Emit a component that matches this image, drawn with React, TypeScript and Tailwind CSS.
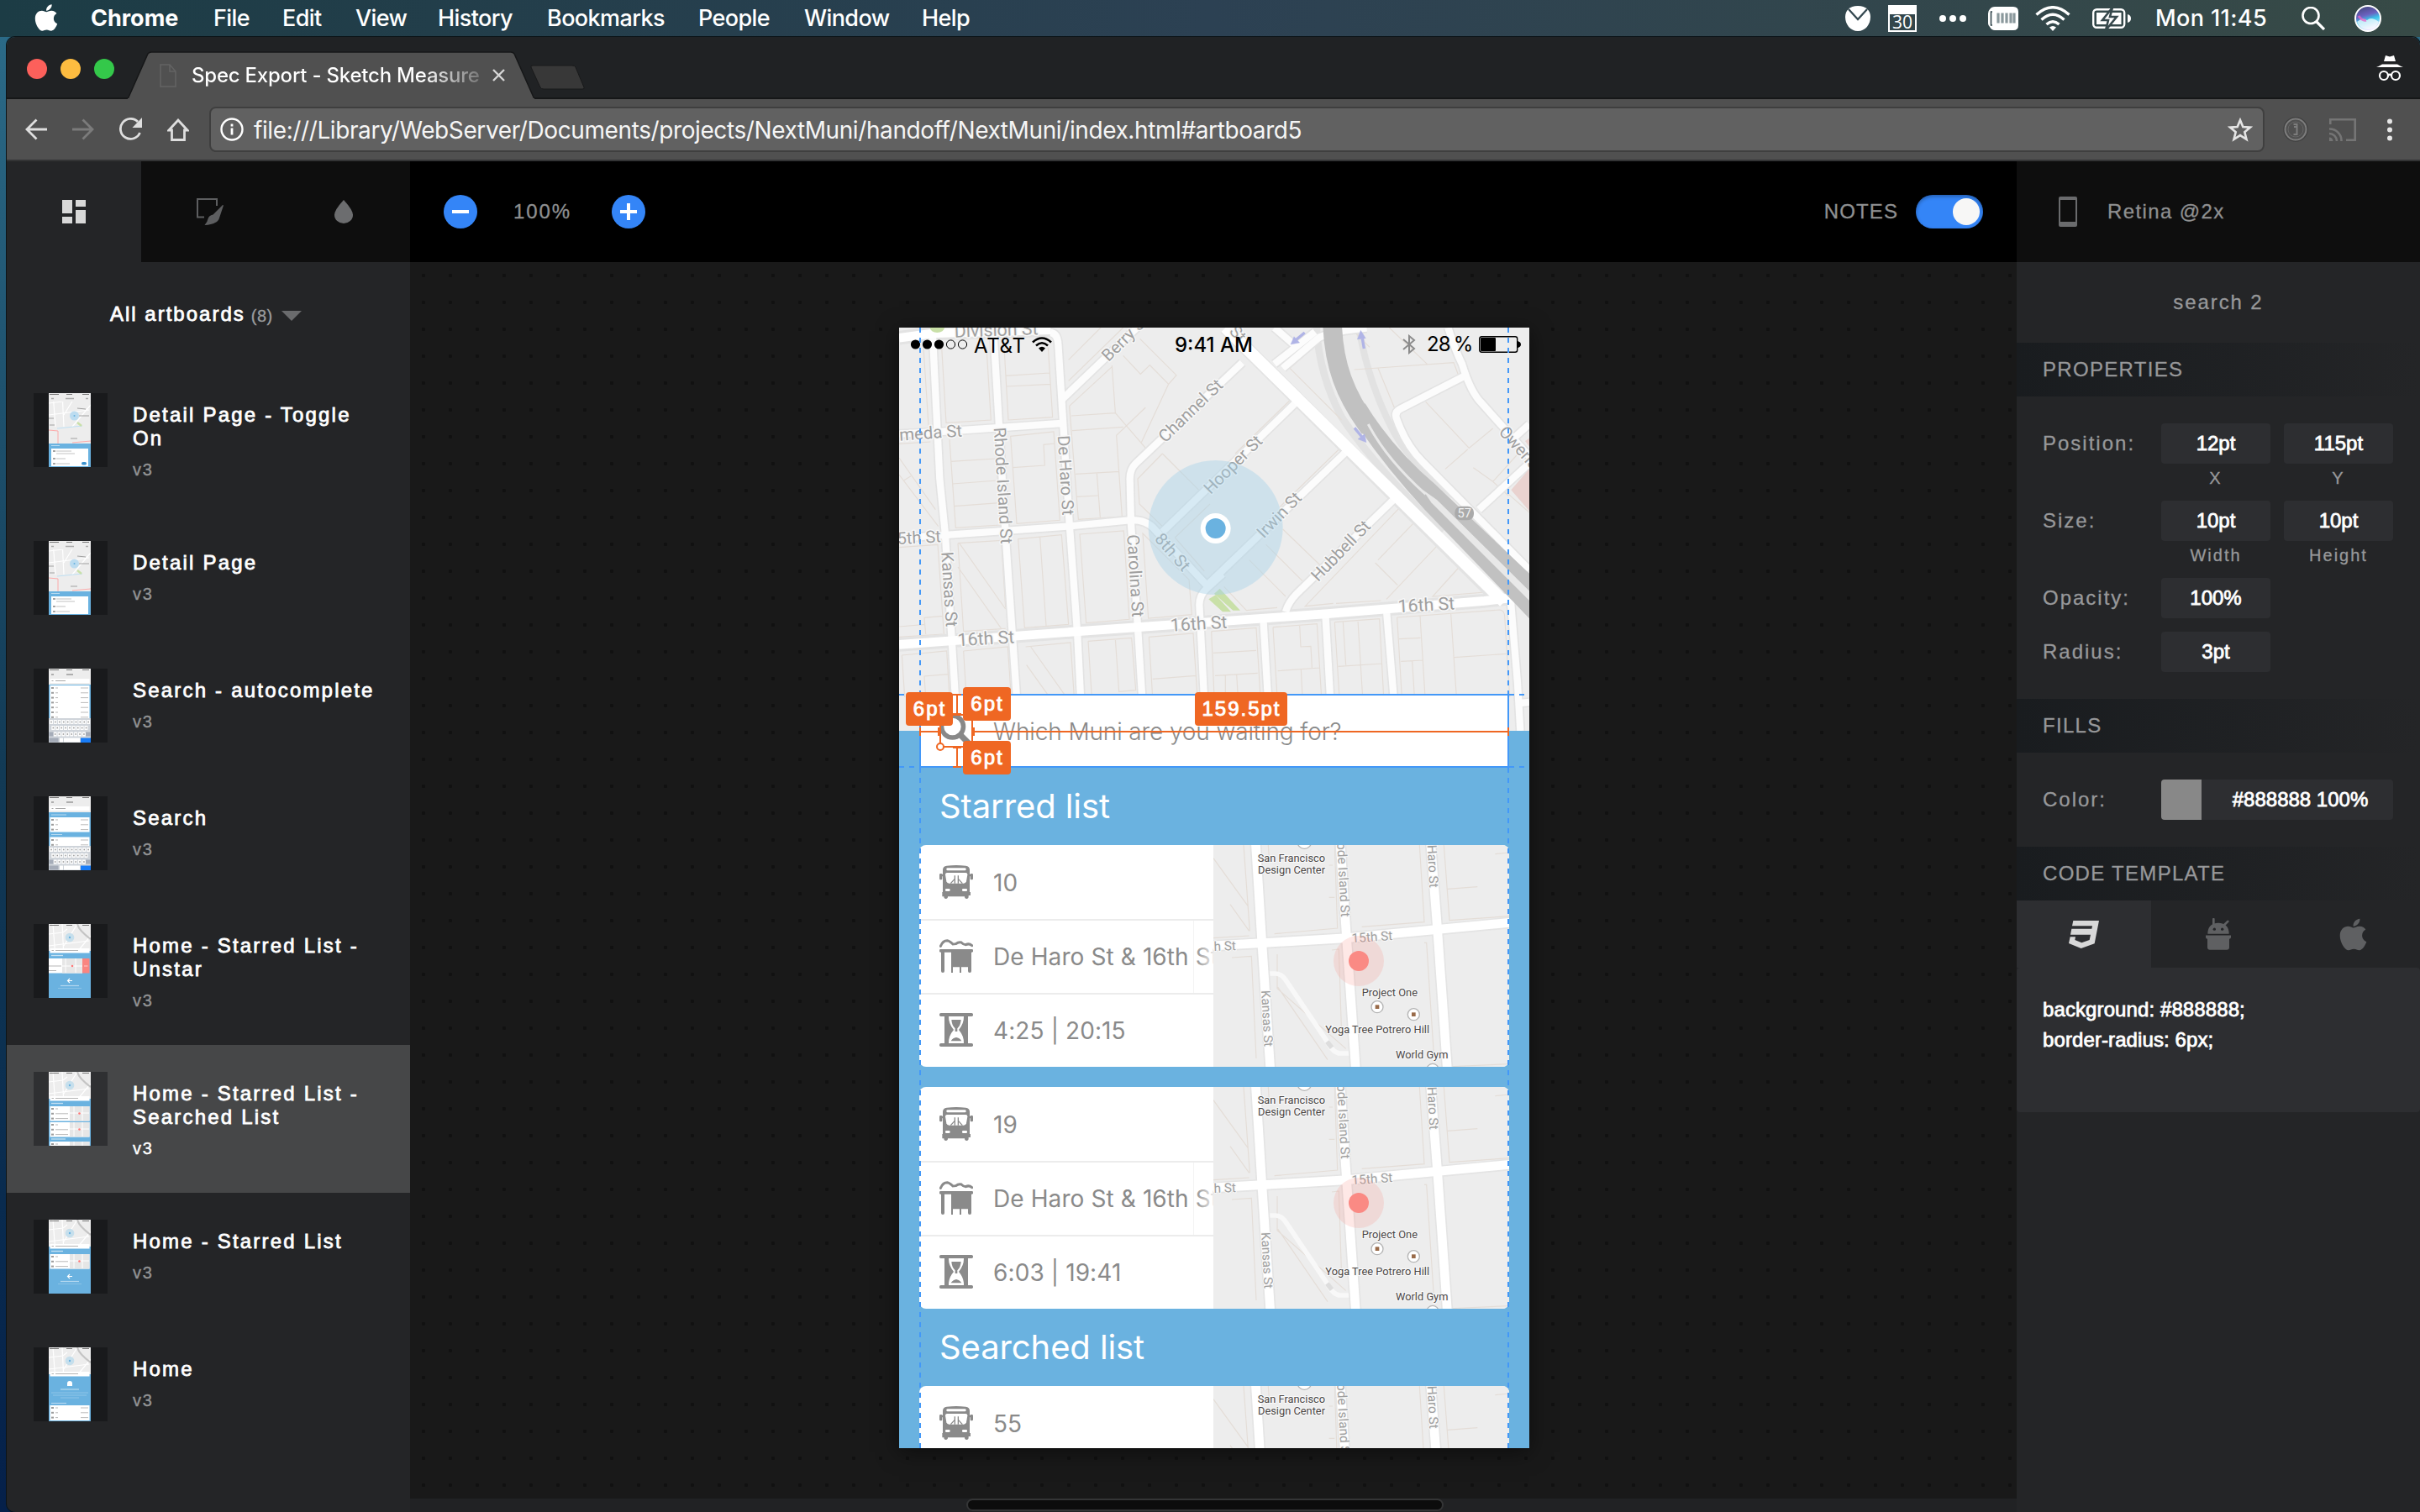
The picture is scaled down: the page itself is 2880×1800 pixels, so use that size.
import type { ReactNode } from 'react';
import { FaApple } from 'react-icons/fa';

/* ---------- macOS menu bar ---------- */

const MENUS = [
  { label: 'Chrome', cls: 'w-[146px] font-bold tracking-[0px]' },
  { label: 'File', cls: 'w-[82px]' },
  { label: 'Edit', cls: 'w-[87px]' },
  { label: 'View', cls: 'w-[98px]' },
  { label: 'History', cls: 'w-[130px]' },
  { label: 'Bookmarks', cls: 'w-[180px]' },
  { label: 'People', cls: 'w-[126px]' },
  { label: 'Window', cls: 'w-[140px]' },
  { label: 'Help', cls: 'w-[70px]' },
];

function MenuBar() {
  return (
    <header className="flex h-11 items-center bg-gradient-to-r from-[#1c3c45] via-[#2c4153] to-[#374a46] font-[Inter] text-[27px] font-medium tracking-[-0.6px] text-white">
      <FaApple className="mb-[3px] ml-[37px] size-9" />
      <nav className="ml-[35px] flex pt-px">
        {MENUS.map((m) => (
          <span key={m.label} className={m.cls}>{m.label}</span>
        ))}
      </nav>
      <div className="ml-auto flex items-center">
        <svg className="h-[32px] w-[32px]" viewBox="0 0 32 32">
          <path d="M16 1C26 1 31 7 31 14c0 9-6 17-15 17S1 23 1 14C1 7 6 1 16 1z" fill="#fff" />
          <path d="M5 5l11 12L27 5" fill="none" stroke="#33474f" strokeWidth="2.2" />
        </svg>
        <svg className="ml-5 h-8 w-[34px]" viewBox="0 0 34 32">
          <rect x="1" y="1" width="32" height="30" fill="none" stroke="#fff" strokeWidth="2" />
          <rect width="34" height="11" fill="#fff" />
          <text x="17" y="28" textAnchor="middle" fontFamily="Open Sans" fontSize="21" letterSpacing="0" fill="#fff">30</text>
        </svg>
        <svg className="ml-[27px] h-2 w-8" viewBox="0 0 32 8">
          <circle cx="4" cy="4" r="4" fill="#fff" /><circle cx="16" cy="4" r="4" fill="#fff" /><circle cx="28" cy="4" r="4" fill="#fff" />
        </svg>
        <svg className="ml-[26px] h-7 w-9" viewBox="0 0 36 28">
          <path d="M8 0h22q6 0 6 6v16q0 6-6 6H8q-4 0-6-4Q0 22 0 20V8q0-3 2-5 2-3 6-3z" fill="#fff" />
          <path d="M5 6H3.500V22H5" fill="none" stroke="#35484e" strokeWidth="1.6" />
          <path d="M12 7.500v12M17 7.500v12M22 7.500v12M27 7.500v12M31 7.500v12" stroke="#8a989c" strokeWidth="3.200" />
        </svg>
        <svg className="ml-5 h-[30px] w-[42px]" viewBox="0 0 42 30">
          <g fill="none" stroke="#fff" strokeWidth="3.400">
            <path d="M1.500 10.500Q21-7 40.500 10.500" /><path d="M7.500 16.500Q21 4 34.500 16.500" /><path d="M13.500 22Q21 15.500 28.500 22" />
          </g>
          <path d="M17 25.500q4-3 8 0l-4 4.500z" fill="#fff" />
        </svg>
        <svg className="ml-[26px] h-6 w-[46px]" viewBox="0 0 46 24">
          <rect x="1.200" y="1.200" width="37" height="21.600" rx="4" fill="none" stroke="#fff" strokeWidth="2.400" />
          <rect x="5" y="5" width="29.500" height="14" fill="#fff" />
          <path d="M42 7v10q4-1 4-5t-4-5z" fill="#fff" />
          <path d="M24-1L12 14h7l-3 12 13-16h-8z" fill="#fff" stroke="#37494d" strokeWidth="2.600" />
        </svg>
        <span className="ml-[29px] w-[174px] pt-px tracking-[0.4px]">Mon 11:45</span>
        <svg className="h-7 w-7" viewBox="0 0 28 28" fill="none" stroke="#fff">
          <circle cx="11" cy="10.500" r="9.500" strokeWidth="2.600" /><path d="M17.500 17.500L27 27" strokeWidth="3.200" />
        </svg>
        <svg className="ml-[35px] mr-[46px] h-8 w-8" viewBox="0 0 32 32">
          <defs>
            <linearGradient id="siri" x1="0" y1="0" x2="0.300" y2="1">
              <stop offset="0" stopColor="#3b3f6e" /><stop offset="0.450" stopColor="#6b62c0" /><stop offset="0.650" stopColor="#39c5ea" /><stop offset="1" stopColor="#e7e4ff" />
            </linearGradient>
          </defs>
          <circle cx="16" cy="16" r="15" fill="url(#siri)" stroke="#fff" strokeWidth="2" />
          <path d="M3 20q6-6 12-2 5-5 14 2-3 9-13 9T3 20z" fill="#fff" opacity="0.700" />
          <path d="M5 13q4 6 9 5" stroke="#e566c8" strokeWidth="3" fill="none" opacity="0.800" />
        </svg>
      </div>
    </header>
  );
}

/* ---------- Browser chrome ---------- */

function TabStrip() {
  return (
    <div className="flex h-[74px] border-b-2 border-[#161718] bg-[#202224]">
      <div className="ml-6 flex items-center gap-4 pt-[3px]">
        <span className="size-6 rounded-full bg-[#fc605b]" />
        <span className="size-6 rounded-full bg-[#fdbc40]" />
        <span className="size-6 rounded-full bg-[#34c84a]" />
      </div>
      <div className="relative ml-4 mt-[17px] h-[57px] w-[484px]">
        <svg className="absolute inset-0 size-full" viewBox="0 0 484 57">
          <path d="M0 57L24 3Q25.500 1 28 1H456Q458.500 1 460 3L484 57z" fill="#505050" stroke="#161718" strokeWidth="1.500" />
          <path d="M0 56h484v1H0z" fill="#505050" />
        </svg>
        <div className="relative flex h-full items-center pl-[38px]">
          <svg className="h-7 w-5" viewBox="0 0 20 28" fill="none" stroke="#636363" strokeWidth="1.500">
            <path d="M1 1h11l7 8v18H1zM12 1v8h7" />
          </svg>
          <span className="ml-[18px] w-[345px] whitespace-nowrap bg-gradient-to-r from-white from-80% to-white/20 bg-clip-text font-[Inter] text-[24px] font-medium tracking-[-0.22px] text-transparent">
            Spec Export - Sketch Measure
          </span>
          <svg className="ml-[13px] size-[15px]" viewBox="0 0 15 15" stroke="#d6d6d6" strokeWidth="2.400"><path d="M1 1l13 13M14 1L1 14" /></svg>
        </div>
      </div>
      <svg className="-ml-[5px] mt-[33px] h-[31px] w-[66px]" viewBox="0 0 66 31">
        <path d="M3 1h47q3 0 4 2l10 24q1 2-2 2H16q-3 0-4-2L1 3q-1-2 2-2z" fill="#383838" stroke="#191a1b" strokeWidth="1" />
      </svg>
      <svg className="ml-auto mr-5 mt-[22px] h-8 w-8" viewBox="0 0 32 32" fill="#fff">
        <path d="M9 7L11 0l5 1.500L21 0l2 7zM0 14q3-1 7-3.500h18q4 2.500 7 3.500z" />
        <g fill="none" stroke="#fff" strokeWidth="2.200"><circle cx="9" cy="24" r="5" /><circle cx="23" cy="24" r="5" /><path d="M14 23.500q2-1.500 4 0" /></g>
      </svg>
    </div>
  );
}

function AddressBar() {
  return (
    <div className="flex h-[74px] items-center border-b-2 border-[#333435] bg-[#505050]">
      <div className="flex items-center gap-[30px] pl-[22px] pr-6">
        <svg className="h-[26px] w-[26px]" viewBox="0 0 26 26" fill="none" stroke="#dedede" strokeWidth="2.800"><path d="M26 13H2M13.500 1.500L2 13l11.500 11.500" /></svg>
        <svg className="h-[26px] w-[26px]" viewBox="0 0 26 26" fill="none" stroke="#7b7b7b" strokeWidth="2.800"><path d="M0 13h24M12.500 1.500L24 13 12.500 24.500" /></svg>
        <svg className="h-[28px] w-[27px]" viewBox="0 0 27 28" fill="none" stroke="#dedede" strokeWidth="2.800"><path d="M22 5A12 12 0 1 0 24.500 18" /><path d="M27 0v12H15.500z" fill="#dedede" stroke="none" /></svg>
        <svg className="h-[27px] w-[26px]" viewBox="0 0 26 27" fill="none" stroke="#dedede" strokeWidth="2.800"><path d="M5.500 14v11.500h15V14H24L13 2 2 14z" /></svg>
      </div>
      <div className="flex h-[54px] w-[2446px] items-center rounded-lg border-2 border-[#3f3f3f] bg-[#616161] pl-[11px] pr-3">
        <svg className="size-[28px]" viewBox="0 0 28 28" fill="none" stroke="#fff" strokeWidth="2.400">
          <circle cx="14" cy="14" r="12.500" /><path d="M14 12.500v8M14 7.500v3" strokeWidth="2.800" />
        </svg>
        <span className="ml-3 whitespace-nowrap pt-[2px] font-[Inter] text-[28px] tracking-[-0.4px] text-[#f5f5f5]">
          file:///Library/WebServer/Documents/projects/NextMuni/handoff/NextMuni/index.html#artboard5
        </span>
        <svg className="ml-auto h-[29px] w-[30px]" viewBox="0 0 30 29" fill="none" stroke="#e4e4e4" strokeWidth="2.600">
          <path d="M15 3l3.300 8 8.700.6-6.700 5.600 2.200 8.600-7.500-4.700-7.500 4.700 2.200-8.600L3 11.600l8.700-.6z" />
        </svg>
      </div>
      <svg className="ml-[22px] size-[30px]" viewBox="0 0 30 30" fill="none">
        <circle cx="15" cy="15" r="14" stroke="#404040" strokeWidth="1.500" /><circle cx="15" cy="15" r="12.500" stroke="#7d7d7d" strokeWidth="2" />
        <circle cx="15" cy="15" r="9" stroke="#666" strokeWidth="1" /><path d="M12.500 9h4v12h-4M13 12h3" stroke="#7d7d7d" strokeWidth="2" />
      </svg>
      <svg className="ml-[25px] h-[27px] w-8" viewBox="0 0 32 27" fill="none" stroke="#757575" strokeWidth="2.600">
        <path d="M1.300 7V1.300h29.400v24.400H20M0 12.500A14 14 0 0 1 14.500 27M0 18a9 9 0 0 1 9 9" /><path d="M0 22.500A4.500 4.500 0 0 1 4.500 27H0z" fill="#757575" stroke="none" />
      </svg>
      <svg className="ml-[37px] h-[27px] w-[6px]" viewBox="0 0 6 27" fill="#e6e6e6"><circle cx="3" cy="3.500" r="3" /><circle cx="3" cy="13.500" r="3" /><circle cx="3" cy="23.500" r="3" /></svg>
    </div>
  );
}

/* ---------- Artboard thumbnails ---------- */

const BLUE = '#6ab2e0';

function MiniMap({ h }: { h: number }) {
  return (
    <g>
      <rect width="50" height={h} fill="#ededed" />
      <path d="M5 0l3 40M16 0l2 40M0 12l17-2 5-4M0 26l48-6M34 0L18 26M50 14L28 40" stroke="#fff" strokeWidth="1.200" fill="none" />
      <path d="M1 1.500h11M21 1.500h7M40 1.500h8" stroke="#777" strokeWidth="1" />
      <rect y={h} width="50" height={88 - h} fill={BLUE} />
    </g>
  );
}

function MiniRows({ y, n, right }: { y: number; n: number; right?: boolean }) {
  return (
    <g>
      {Array.from({ length: n }, (_, i) => (
        <g key={i}>
          <rect x="3" y={y + i * 5.8} width="3" height="2" fill="#9c9c9c" />
          <rect x="8" y={y + 0.5 + i * 5.8} width={right ? 3 : i === 0 ? 3 : 15} height="1" fill="#b9b9b9" />
          {right && <rect x="38" y={y + 0.5 + i * 5.8} width="9" height="1" fill="#bcbcbc" />}
        </g>
      ))}
    </g>
  );
}

function MiniCard({ y }: { y: number }) {
  return (
    <g>
      <rect x="1.500" y={y} width="47" height="17.500" fill="#fff" />
      <rect x="25" y={y} width="23.500" height="17.500" fill="#e6e6e6" />
      <path d={`M30 ${y}v17M40 ${y}v17M25 ${y + 8}h23`} stroke="#fff" />
      <circle cx="36.500" cy={y + 8.500} r="1.300" fill="#f77" />
      <MiniRows y={y + 2} n={3} />
    </g>
  );
}

function Keyboard() {
  return (
    <g>
      <rect y="59" width="50" height="29" fill="#cfd4da" />
      {[61, 68, 75.500].map((y, r) =>
        Array.from({ length: 10 - r }, (_, i) => (
          <g key={`${y}-${i}`}>
            <rect x={1 + r * 2.300 + i * 4.900} y={y} width="4" height="5" rx="0.500" fill="#fdfdfd" />
            <rect x={2.300 + r * 2.300 + i * 4.900} y={y + 1.700} width="1.500" height="1.600" fill="#999" />
          </g>
        )),
      )}
      <rect x="0.500" y="75.500" width="5" height="5" fill="#a5acb8" /><rect x="44" y="75.500" width="5.500" height="5" fill="#a5acb8" />
      <rect x="0.500" y="82.500" width="11" height="5" fill="#a5acb8" /><rect x="13" y="82.500" width="4" height="5" fill="#fff" />
      <rect x="18" y="82.500" width="19" height="5" fill="#fff" /><rect x="38" y="82.500" width="12" height="5.500" fill="#187cf7" />
    </g>
  );
}

type Kind = 'toggle' | 'detail' | 'auto' | 'search' | 'unstar' | 'lists' | 'starred' | 'home';

function Thumb({ kind }: { kind: Kind }) {
  const detail = kind === 'toggle' || kind === 'detail';
  const search = kind === 'auto' || kind === 'search';
  return (
    <svg className="h-[88px] w-[50px]" viewBox="0 0 50 88">
      <rect width="50" height="88" fill={BLUE} />
      {detail && (
        <g>
          <MiniMap h={60} />
          <rect width="50" height="10" fill="#ededed" /><path d="M1 1.500h11M21 1.500h7M40 1.500h8" stroke="#777" strokeWidth="1" />
          <path d="M3 6.500h3M20 6.500h10M44 6.500h3" stroke="#aaa" strokeWidth="1.300" /><path d="M0 44l11 1v15M28 59l22-2" stroke="#f99" fill="none" strokeWidth="0.800" />
          <path d="M10 42l30-3" stroke="#bfe0f3" /><path d="M34 18l10 1M36 27h12M0 30h6M1 38h6M26 54h8" stroke="#999" strokeWidth="0.900" /><path d="M34 35l5 4" stroke="#c9e0a8" strokeWidth="2.500" />
          <circle cx="30.500" cy="27" r="5.500" fill="#bcdcf0" /><circle cx="30.500" cy="27" r="1" fill={BLUE} />
          <path d="M3 62.500h10" stroke="#b8dbf1" strokeWidth="1" /><rect x="3" y="66" width="44" height="21" fill="#fff" />
          <path d="M5 69h3M5 78h3M5 84h3" stroke="#888" strokeWidth="1.600" /><path d="M9 69h18M9 72h22M9 78h11M9 84h16" stroke="#bbb" strokeWidth="0.900" />
          {kind === 'toggle' && <rect x="39" y="82" width="6" height="3.500" rx="1.700" fill="#3c93cf" />}
        </g>
      )}
      {search && (
        <g>
          <rect width="50" height="19" fill="#ededed" /><path d="M1 1.500h11M21 1.500h7M40 1.500h8" stroke="#777" strokeWidth="1" />
          <path d="M3 7h3M21 7h8" stroke="#999" strokeWidth="1.300" /><rect x="1.500" y="12" width="47" height="5" fill="#fff" />
          <path d="M3.500 14.500h2M8 14.500h12" stroke="#aaa" strokeWidth="1" />
          {kind === 'auto' ? <rect x="1.500" y="20" width="47" height="40" fill="#fff" /> : (
            <g><rect x="1.500" y="25" width="47" height="17.500" fill="#fff" /><rect x="1.500" y="48.500" width="47" height="11" fill="#fff" /><path d="M3 22h18M3 45.500h13" stroke="#b8dbf1" /></g>
          )}
          {kind === 'auto' ? <MiniRows y={22} n={7} right /> : <g><MiniRows y={27} n={3} right /><MiniRows y={51} n={2} right /></g>}
          <Keyboard />
        </g>
      )}
      {!detail && !search && (
        <g>
          <MiniMap h={32} />
          <path d="M34 0q2 8 16 18" stroke="#c4c4c4" strokeWidth="2.200" fill="none" />
          <circle cx="25" cy="16" r="5.300" fill="#c6dfec" /><circle cx="25" cy="16" r="1.200" fill={BLUE} />
          <rect x="1.500" y="29" width="47" height="5.500" fill="#fff" /><path d="M3.500 31.500h2.500M8 31.500h27" stroke="#b5b5b5" strokeWidth="1" />
          {kind !== 'home' && <path d="M3 37.500h14" stroke="#c5e1f3" strokeWidth="1.300" />}
          {kind === 'lists' && <g><MiniCard y={41} /><MiniCard y={60} /><path d="M3 80h17" stroke="#c5e1f3" strokeWidth="1.300" /><MiniCard y={83} /></g>}
          {kind === 'starred' && <MiniCard y={41} />}
          {kind === 'unstar' && (
            <g>
              <rect y="41" width="40" height="17.500" fill="#fff" /><rect x="16" y="41" width="24" height="17.500" fill="#e6e6e6" />
              <path d="M20 41v17M32 41v17M16 50h24" stroke="#fff" /><rect x="40" y="41" width="8.500" height="17.500" fill="#f98580" />
              <circle cx="28" cy="50" r="1.300" fill="#f77" /><path d="M0 50h15M0 55.500h9" stroke="#b5b5b5" /><path d="M42 50h4.500" stroke="#fcc" />
            </g>
          )}
          {(kind === 'unstar' || kind === 'starred') && (
            <g><path d="M28 67.500h-5.500M25 65l-2.500 2.500 2.500 2.500" stroke="#fff" fill="none" strokeWidth="1.200" /><path d="M14 73.500h22" stroke="#b4d8ef" strokeWidth="1.200" /><path d="M11 76.500h28" stroke="#8fc5e8" strokeWidth="0.900" /></g>
          )}
          {kind === 'home' && (
            <g>
              <path d="M22 46v-3q0-3 3-3t3 3v3z" fill="#fff" /><path d="M14 50h22" stroke="#b4d8ef" strokeWidth="1.300" />
              <path d="M3 54h44M5 57h40M14 60h22" stroke="#8fc5e8" strokeWidth="1" /><path d="M3 66.500h18" stroke="#b4d8ef" strokeWidth="1.200" />
              <rect x="1.500" y="69" width="47" height="18" fill="#fff" /><MiniRows y={71} n={3} right />
            </g>
          )}
        </g>
      )}
    </svg>
  );
}

/* ---------- Left sidebar ---------- */

const ARTBOARDS: { name: string; kind: Kind; tall?: boolean; active?: boolean }[] = [
  { name: 'Detail Page - Toggle On', kind: 'toggle', tall: true },
  { name: 'Detail Page', kind: 'detail' },
  { name: 'Search - autocomplete', kind: 'auto' },
  { name: 'Search', kind: 'search' },
  { name: 'Home - Starred List - Unstar', kind: 'unstar', tall: true },
  { name: 'Home - Starred List - Searched List', kind: 'lists', tall: true, active: true },
  { name: 'Home - Starred List', kind: 'starred' },
  { name: 'Home', kind: 'home' },
];

function Sidebar() {
  return (
    <aside className="flex w-[480px] flex-col bg-[#242527]">
      <div className="flex h-[120px] bg-[#0e0e0e]">
        <div className="flex w-40 items-center justify-center bg-[#242527]">
          <svg className="h-7 w-7" viewBox="0 0 28 28" fill="#d8d8d8"><path d="M0 0h12v16H0zM16 0h12v8H16zM0 20h12v8H0zM16 12h12v16H16z" /></svg>
        </div>
        <div className="flex w-40 items-center justify-center pl-1">
          <svg className="h-8 w-8" viewBox="0 0 32 32"><path d="M9 22.500H1V1h23v8" fill="none" stroke="#5d5e60" strokeWidth="2" /><path d="M32 8.500L26.500 25q-3 6-17 7 3.500-4 4-7.500 1-4 6-5L31 8z" fill="#5d5e60" /></svg>
        </div>
        <div className="flex w-40 items-center justify-center pl-[2px]">
          <svg className="h-7 w-[22px]" viewBox="0 0 22 28"><path d="M11 0q11 12 11 18a11 10 0 0 1-22 0Q0 12 11 0z" fill="#6c6d6f" /></svg>
        </div>
      </div>
      <div className="flex h-[124px] items-center pl-[123px]">
        <span className="text-[24px] tracking-[2px] text-white [-webkit-text-stroke:0.8px_white]">All artboards</span>
        <span className="ml-[7px] mt-1 w-[29px] text-[20px] tracking-[0.5px] text-[#9b9c9d] [-webkit-text-stroke:0.3px_#9b9c9d]">(8)</span>
        <svg className="ml-[7px] mt-1 h-3 w-6" viewBox="0 0 24 12"><path d="M0 0h24L12 12z" fill="#6a6b6d" /></svg>
      </div>
      {ARTBOARDS.map((a) => (
        <div key={a.name} className={`flex shrink-0 pl-8 pt-8 ${a.tall ? 'h-44' : 'h-[152px]'} ${a.active ? 'bg-[#464748]' : ''}`}>
          <div className={`flex h-[88px] w-[88px] justify-center pr-[2px] ${a.active ? 'bg-[#2f3032]' : 'bg-[#191a1c]'}`}>
            <Thumb kind={a.kind} />
          </div>
          <div className="ml-[30px] w-[296px] pt-3">
            <div className="text-[24px] leading-7 tracking-[2.2px] text-white [-webkit-text-stroke:0.8px_white]">{a.name}</div>
            <div className={`mt-[9px] text-[20px] leading-7 tracking-[1.8px] [-webkit-text-stroke:0.4px_currentColor] ${a.active ? 'text-white' : 'text-[#929394]'}`}>v3</div>
          </div>
        </div>
      ))}
    </aside>
  );
}

/* ---------- City map behind the search field ---------- */

function Label({ x, y, r, size = 60, children }: { x: number; y: number; r: number; size?: number; children: ReactNode }) {
  return (
    <text transform={`translate(${x} ${y}) rotate(${r})`} fontFamily="Roboto" fontSize={size} fill="#9f9f9f" stroke="#f8f8f8" strokeWidth={size / 7} strokeLinejoin="round" paintOrder="stroke">
      {children}
    </text>
  );
}

const MINOR_ROADS = [
  'M180 90L205 600L225 800L268 1500', 'M398 90L440 800L488 1500', 'M600 78Q626 80 628 120L668 760L697 1160L714 1500',
  'M60 440L205 432L640 402', 'M60 812L240 800L660 770L880 748Q940 744 970 778L1160 982',
  'M1285 185L905 545Q884 565 884 600L888 760L912 1130L935 1500', 'M640 318L925 45',
  'M1400 190L1545 75', 'M1430 205L1560 95Q1620 70 1730 62', 'M1400 60L1480 130',
  'M1000 790L1495 310', 'M1165 975L1670 490', 'M1440 1075Q1450 1040 1480 1010L1835 665',
  'M1215 940L1160 990Q1132 1015 1132 1050L1155 1500', 'M1360 1100L1384 1500', 'M1582 1080L1606 1500', 'M1800 1070L1836 1500', 'M2244 1040L2268 1330L2278 1500',
  'M2020 60Q2045 140 2070 190Q2100 290 2140 330L2310 520', 'M2075 235L1850 350Q1825 362 1838 390Q1870 480 1930 540L2310 925',
  'M2130 710L2310 545', 'M2260 450L2310 405', 'M2268 1402L2310 1398',
];

const PARCELS = [
  'M147 130L165 410M212 130L228 400L388 390L372 130M435 130L450 390L608 380L592 130M440 232L598 222M443 270L602 262',
  'M240 460L262 775L420 765L405 450M245 538L405 528M250 618L412 606M255 698L418 686M458 448L480 760L634 748L612 432zM466 560L580 552L576 478L614 474',
  'M60 525L190 710M60 585L200 770M78 605L102 590M60 475L172 468M60 845L198 835L220 1155M60 1165L215 1155M60 1128L152 1120L155 1155M152 1120L150 1096L215 1090',
  'M270 830L425 820L440 1060M275 830L440 1065M270 915L425 1135M270 830L290 1145L440 1135M485 815L640 800L665 1120L508 1132zM563 808L585 1125M705 798L862 786L882 1102L728 1115z',
  'M820 195L832 365L675 375M832 365L940 490M860 415L678 428M668 340L820 200M668 340L700 745L856 735L836 445L940 345M690 583L846 574M766 580L778 738M695 664L770 660M665 175L780 60M665 250L860 60',
  'M860 160L922 226L955 194L1022 262L1050 230L920 100M1022 262L925 470M1000 510L1130 640M1000 510L912 600L918 690L1000 770M1045 810L1170 690M1045 810L1150 930',
  'M930 795L950 1098L1105 1085L1095 960z M1330 130L1465 310L1260 510M1505 350L1640 485L1420 700M1680 525L1815 655M1850 700L1985 835L1800 1030M1850 700L1510 1055L1610 1045M1430 780L1570 915M1370 835L1500 965M1310 890L1440 1020M1220 985L1300 1070L1410 1060',
  'M1760 900L1840 980M1900 755L1770 890M2060 915L1965 1020L2150 1005zM1620 1045L1780 1035',
  'M1455 205L1640 390M1670 60L1740 130M1455 205L1540 130M1685 210L2040 185L2055 225M1770 205L1830 350M1810 60L1945 190M1940 325L2095 490L2180 420M2090 495L2010 565M2110 560L2180 610L2270 510M2230 650L2310 720M2180 610L2235 660',
  'M70 1230L230 1215L240 1380M70 1230L80 1380M155 1380L150 1305L235 1298M290 1215L448 1200L460 1380M290 1215L300 1380M512 1200L672 1185L685 1380M530 1200L650 1370M515 1265L590 1370M735 1180L890 1168L905 1355L845 1360L832 1172M735 1180L748 1380',
  'M952 1165L1110 1152L1125 1380M952 1165L965 1380M965 1315L1120 1303M1175 1145L1335 1132L1350 1380M1175 1145L1185 1380M1182 1222L1335 1213M1188 1303L1340 1294M1225 1300V1380M1265 1298L1270 1380',
  'M1395 1130L1552 1118L1568 1380M1395 1130L1410 1380M1490 1122L1494 1200L1530 1198L1534 1275M1412 1286L1562 1275M1495 1280L1500 1380M1615 1112L1775 1100L1790 1380M1615 1112L1632 1380M1645 1110L1655 1265M1698 1106L1715 1380M1628 1270L1785 1260',
  'M1838 1095L2205 1068Q2220 1070 2222 1090L2240 1380M1838 1095L1855 1380M1920 1090L1938 1380M2030 1082L2050 1380M1845 1172L1922 1168M1852 1252L1930 1248M2042 1238L2228 1225M1892 1250L1900 1380',
];

function CityMap() {
  return (
    <svg className="h-[480px] w-[750px]" viewBox="60 60 2250 1440">
      <rect x="60" y="60" width="2250" height="1440" fill="#ededed" />
      <path d="M1550 60Q1560 230 1640 380Q1760 560 2000 790" stroke="#e2e2e2" strokeWidth="26" fill="none" />
      <path d="M1705 80Q1740 270 1830 440Q1900 560 2040 660" stroke="#e2e2e2" strokeWidth="24" fill="none" />
      {PARCELS.map((d) => <path key={d} d={d} fill="none" stroke="#e4ddd7" strokeWidth="3.500" />)}
      <g fill="none" strokeLinejoin="round">
        {MINOR_ROADS.map((d) => <path key={d} d={d} stroke="#e3e3e3" strokeWidth="35" />)}
        <path d="M60 97L150 85L190 80L600 68M60 1192L700 1145L1170 1112L1590 1082L2150 1036L2310 1018M1225 60L2210 1040" stroke="#e3e3e3" strokeWidth="50" />
        {MINOR_ROADS.map((d) => <path key={d} d={d} stroke="#fcfcfc" strokeWidth="25" />)}
        <path d="M60 97L150 85L190 80L600 68M60 1192L700 1145L1170 1112L1590 1082L2150 1036L2310 1018" stroke="#fff" strokeWidth="32" />
        <path d="M1225 60L2220 1040" stroke="#fff" strokeWidth="42" />
        <path d="M1607 50C1612 190 1650 300 1740 420" stroke="#c1c1c1" strokeWidth="68" />
        <path d="M1730 405Q1830 550 1960 690L2340 1085" stroke="#c1c1c1" strokeWidth="62" />
        <path d="M1700 345Q1800 510 1960 645L2340 1005" stroke="#c1c1c1" strokeWidth="56" />
        <path d="M1735 405Q1800 530 1940 655" stroke="#e8e8e8" strokeWidth="9" />
        <path d="M1930 640L1980 675L2340 1030L2325 1050L1960 685z" fill="#e8e8e8" />
      </g>
      <path d="M2245 640L2310 565V715z" fill="#e9d2cf" /><path d="M2295 465L2310 455V485z" fill="#e9d2cf" />
      <path d="M1165 1030L1190 1015L1245 1075H1215zM1185 1010L1205 992L1278 1070H1252z" fill="#c9e0a8" /><path d="M170 60a26 18 0 0 0 52 0z" fill="#c9e0a8" />
      <g stroke="#b0b4e6" strokeWidth="10" fill="#b0b4e6">
        <path d="M1508 78L1478 103" /><path d="M1458 120L1470 92L1490 114z" strokeWidth="1" />
        <path d="M1686 418L1712 450" /><path d="M1728 470L1722 440L1698 458z" strokeWidth="1" />
        <path d="M1720 135L1714 100" /><path d="M1708 70L1696 102L1726 98z" strokeWidth="1" />
      </g>
      <rect x="2044" y="698" width="68" height="50" rx="22" fill="#aaa" />
      <text x="2078" y="739" textAnchor="middle" fontFamily="Roboto" fontSize="44" fill="#f2f2f2">57</text>
      <Label x={258} y={95} r={-2} size={64}>Division St</Label>
      <Label x={62} y={464} r={-4} size={61}>meda St</Label>
      <Label x={398} y={418} r={86.500}>Rhode Island St</Label>
      <Label x={626} y={446} r={86.500}>De Haro St</Label>
      <Label x={211} y={862} r={86.500}>Kansas St</Label>
      <Label x={874} y={800} r={86.500} size={61}>Carolina St</Label>
      <Label x={54} y={834} r={-3}>5th St</Label>
      <Label x={270} y={1198} r={-3.500} size={64}>16th St</Label>
      <Label x={1030} y={1145} r={-3.500} size={64}>16th St</Label>
      <Label x={1842} y={1078} r={-3.500} size={64}>16th St</Label>
      <Label x={808} y={184} r={-45}>Berry St</Label>
      <Label x={1010} y={473} r={-44} size={61}>Channel St</Label>
      <Label x={1172} y={658} r={-45}>Hooper St</Label>
      <Label x={1362} y={815} r={-46}>Irwin St</Label>
      <Label x={1556} y={970} r={-46}>Hubbell St</Label>
      <Label x={970} y={816} r={49}>8th St</Label>
      <Label x={2198} y={434} r={48}>Owens</Label>
      <Label x={1236} y={76} r={46}>St</Label>
      <circle cx="1190" cy="774" r="240" fill="#a5d1ea" fillOpacity="0.420" />
      <circle cx="1190" cy="777" r="54" fill="#fff" /><circle cx="1190" cy="777" r="36" fill={BLUE} />
    </svg>
  );
}

/* ---------- Stop map inside a card ---------- */

function Poi({ x, y }: { x: number; y: number }) {
  return <g><circle cx={x} cy={y} r="21" fill="#fff" stroke="#b5b5b5" strokeWidth="4" /><rect x={x - 7} y={y - 7} width="14" height="14" fill="#996b4a" /></g>;
}

function Place({ x, y, children }: { x: number; y: number; children: ReactNode }) {
  return <text x={x} y={y} fontFamily="Roboto" fontSize="38.500" fill="#4a4746" stroke="#fafafa" strokeWidth="6" paintOrder="stroke">{children}</text>;
}

function StopMap() {
  const roads = ['M193 610L215 960L245 1415', 'M495 610L517 940L550 1415', 'M818 610L842 920L877 1415', 'M36 978L215 968L520 950L1100 895'];
  return (
    <svg className="h-[264px] w-[352px]" viewBox="42 618 1056 792">
      <rect x="42" y="618" width="1056" height="792" fill="#ededed" />
      <path d="M42 665L165 835M150 618L172 925M102 830L170 925M42 950L170 942M238 618L242 680M455 690H468M455 805H475M475 618L485 915L260 935M572 910L795 893L778 618M865 618L885 887L1098 872M878 775L985 767M1048 650L1098 645M108 1020L178 1015L195 1380M270 1008V1130L515 1345M272 1125L450 1385M465 993L490 990L500 1300M795 967H803L830 1380M870 1410L1098 1400" fill="none" stroke="#e4ddd7" strokeWidth="3.500" />
      <path d="M240 1077H262Q285 1077 300 1100L445 1315Q470 1362 495 1362H535" fill="none" stroke="#f8f8f8" strokeWidth="17" />
      <path d="M448 1320L465 1342" stroke="#ddd" strokeWidth="17" />
      <g fill="none">
        {roads.map((d) => <path key={d} d={d} stroke="#e4e4e4" strokeWidth="42" />)}
        {roads.map((d) => <path key={d} d={d} stroke="#fff" strokeWidth="32" />)}
      </g>
      <Label x={44} y={996} r={-2} size={46}>h St</Label>
      <Label x={484} y={610} r={87} size={46}>ode Island St</Label>
      <Label x={806} y={618} r={87} size={46}>Haro St</Label>
      <Label x={537} y={967} r={-4} size={46}>15th St</Label>
      <Label x={213} y={1138} r={87} size={45}>Kansas St</Label>
      <circle cx="367" cy="606" r="25" fill="#fff" stroke="#b5b5b5" strokeWidth="4" />
      <circle cx="825" cy="1420" r="21" fill="#fff" stroke="#b5b5b5" strokeWidth="4" />
      <Place x={200} y={678}>San Francisco</Place>
      <Place x={201} y={720}>Design Center</Place>
      <Place x={572} y={1158}>Project One</Place>
      <Place x={442} y={1290}>Yoga Tree Potrero Hill</Place>
      <Place x={693} y={1380}>World Gym</Place>
      <Poi x={627} y={1196} /><Poi x={757} y={1223} />
      <circle cx="561" cy="1032" r="90" fill="#fa8a84" fillOpacity="0.200" /><circle cx="561" cy="1032" r="36" fill="#fa8a84" />
    </svg>
  );
}

/* ---------- Card rows ---------- */

const BusIcon = () => (
  <svg className="size-10 shrink-0" viewBox="174 690 120 120" fill="#8a8a8a">
    <path d="M186 706Q186 694 200 692Q234 688 268 692Q282 694 282 706V786H285V798H278V802A7 8 0 0 1 264 802H204A7 8 0 0 1 190 802H184V786H186z" />
    <rect x="174" y="720" width="10" height="22" rx="4" /><rect x="284" y="720" width="10" height="22" rx="4" /><path d="M180 722h108v8H180z" />
    <rect x="199" y="700" width="70" height="9" rx="4" fill="#fff" />
    <path d="M201 717H268Q274 717 274 724L270 748Q268 755 260 755H209Q201 755 199 748L195 724Q195 717 201 717z" fill="#fff" />
    <path d="M229 727V755M241 727V755" stroke="#8a8a8a" strokeWidth="4" /><path d="M228 740L214 755M242 740L256 755" stroke="#8a8a8a" strokeWidth="4" />
    <rect x="195" y="774" width="17" height="9" rx="4" fill="#fff" /><rect x="255" y="774" width="18" height="9" rx="4" fill="#fff" />
  </svg>
);

const StopIcon = () => (
  <svg className="size-10 shrink-0" viewBox="174 954 120 120" fill="#8a8a8a">
    <path d="M178 979Q186 959 202 959Q210 960 222 972L232 971Q242 964 252 966Q260 974 268 974Q280 968 290 977" fill="none" stroke="#8a8a8a" strokeWidth="9" strokeLinecap="round" />
    <rect x="174" y="990" width="120" height="11" rx="4" />
    <path d="M180 998h12v70q0 6-6 6t-6-6zM216 998h72v70q0 6-6 6t-6-6v-14h-24v20h-6v-20h-24v20h-6z" />
  </svg>
);

const HourglassIcon = () => (
  <svg className="size-10 shrink-0" viewBox="174 1218 120 120" fill="#8a8a8a">
    <rect x="174" y="1218" width="120" height="12" rx="5" /><rect x="174" y="1326" width="120" height="12" rx="5" /><rect x="192" y="1228" width="84" height="100" />
    <path d="M207 1230H261Q262 1255 243 1278Q262 1300 261 1326H207Q206 1300 225 1278Q206 1255 207 1230z" fill="#fff" />
    <path d="M217 1242H251Q250 1262 238 1273V1284H230V1273Q218 1262 217 1242zM215 1318Q222 1306 234 1305Q246 1306 253 1318z" />
  </svg>
);

function CardRow({ icon, fade, children }: { icon: ReactNode; fade?: boolean; children: ReactNode }) {
  return (
    <div className="relative flex h-[88px] items-center overflow-hidden border-t-2 border-[#ececec] pb-[2px] pl-6 first:border-t-0 first:pb-0">
      {icon}
      <span className="ml-6 whitespace-nowrap pt-px">{children}</span>
      {fade && <span className="absolute right-0 top-0 h-full w-6 border-l border-[#f4f4f4] bg-gradient-to-r from-white/0 to-white/80" />}
    </div>
  );
}

function RouteCard({ route, times }: { route: string; times: string }) {
  return (
    <div className="flex h-[264px] w-[702px] shrink-0 overflow-hidden rounded-lg bg-white">
      <div className="w-[350px] font-[Inter] text-[28px] tracking-[0.1px] text-[#8a8a8a]">
        <CardRow icon={<BusIcon />}>{route}</CardRow>
        <CardRow icon={<StopIcon />} fade>De Haro St &amp; 16th St</CardRow>
        <CardRow icon={<HourglassIcon />}>{times}</CardRow>
      </div>
      <StopMap />
    </div>
  );
}

/* ---------- Phone artboard ---------- */

function StatusBar() {
  return (
    <div className="absolute inset-x-0 top-0 flex h-10 items-center whitespace-nowrap font-[Inter] text-[24px] text-black">
      <svg className="ml-[13px] h-3 w-[69px]" viewBox="0 0 69 12">
        <circle cx="6.500" cy="6" r="5.600" /><circle cx="20.500" cy="6" r="5.600" /><circle cx="34.500" cy="6" r="5.600" />
        <g fill="none" stroke="#000"><circle cx="48.500" cy="6" r="5.100" /><circle cx="62.500" cy="6" r="5.100" /></g>
      </svg>
      <span className="ml-[7px] mt-[3px] w-[62px] tracking-[0.700px]">AT&amp;T</span>
      <svg className="ml-[7px] h-[18px] w-6" viewBox="0 0 24 18">
        <g fill="none" stroke="#000" strokeWidth="2.600"><path d="M1 6.500Q12-3.500 23 6.500" /><path d="M5 10.500Q12 4 19 10.500" /></g><path d="M8 13.500q4-3.500 8 0L12 18z" />
      </svg>
      <span className="absolute left-[328px] top-[3px] font-medium">9:41 AM</span>
      <svg className="ml-auto h-6 w-4" viewBox="0 0 16 24" fill="none" stroke="#8c8c8c" strokeWidth="2"><path d="M1 6l13 11-6 5V2l6 5L1 18" /></svg>
      <span className="ml-[13px] w-[55px] tracking-[-0.8px] [word-spacing:-2px]">28 %</span>
      <svg className="ml-[7px] mr-[10px] h-5 w-[50px]" viewBox="0 0 50 20">
        <rect x="0.700" y="0.700" width="45" height="18.600" rx="2.500" fill="none" stroke="#000" strokeWidth="1.400" />
        <rect x="2" y="2" width="18" height="16" rx="1" /><path d="M46 6q4 1 4 4t-4 4z" />
      </svg>
    </div>
  );
}

function Tag({ className, children }: { className: string; children: ReactNode }) {
  return (
    <span className={`absolute flex h-10 items-center justify-center rounded-[4px] bg-[#ef6723] pb-px pl-px text-[24px] tracking-[2px] text-white [-webkit-text-stroke:0.9px_white] ${className}`}>
      {children}
    </span>
  );
}

function Measurements() {
  const dash = { stroke: '#4398f8', strokeWidth: 2, strokeDasharray: '6 6' };
  return (
    <div className="absolute inset-0">
      <svg className="absolute inset-0 size-full" viewBox="0 0 750 1334" fill="none">
        <path d="M25 0V436M725 0V436M25 524V1334M725 524V1334M0 437H24M726 437H750M0 523H24M726 523H750" {...dash} />
        <rect x="25" y="437" width="700" height="86" stroke="#4398f8" strokeWidth="2" />
        <g stroke="#ef6723" strokeWidth="2">
          <rect x="49" y="461" width="38" height="38" />
          <path d="M25 481H48M88 481H725M69 437V460M69 500V523" />
          <path d="M64 437H74M64 460H74M64 500H74M64 523H74M25 476V486M725 476V486" />
          <path d="M47.500 476V486M88.500 476V486" strokeWidth="3" />
          <circle cx="49" cy="499" r="4" fill="#fff" />
        </g>
      </svg>
      <Tag className="left-2 top-[434px] w-14">6pt</Tag>
      <Tag className="left-[76px] top-[428px] w-[57px]">6pt</Tag>
      <Tag className="left-[76px] top-[492px] w-[57px]">6pt</Tag>
      <Tag className="left-[352px] top-[434px] w-[110px]">159.5pt</Tag>
    </div>
  );
}

function Heading({ children }: { children: ReactNode }) {
  return <h2 className="ml-6 flex h-[92px] items-center font-[Inter] text-[40px] tracking-[-0.1px] text-white">{children}</h2>;
}

function Phone() {
  return (
    <div className="relative ml-[582px] mt-[78px] h-[1334px] w-[750px] overflow-hidden bg-[#6ab2e0] shadow-[0_4px_24px_rgba(0,0,0,0.5)]">
      <CityMap />
      <StatusBar />
      <div className="relative -mt-[44px] ml-6 w-[702px]">
        <div className="flex h-[88px] items-center bg-white pl-6">
          <svg className="size-10" viewBox="0 0 40 40" fill="none" stroke="#888">
            <circle cx="15.500" cy="15" r="13" strokeWidth="5.500" /><path d="M25 25L38 38" strokeWidth="7" />
          </svg>
          <span className="ml-6 mt-[2px] font-[Inter] text-[28px] font-light tracking-[-0.12px] text-[#8a8a8a]">Which Muni are you waiting for?</span>
        </div>
        <Heading>Starred list</Heading>
        <div className="flex flex-col gap-6">
          <RouteCard route="10" times="4:25 | 20:15" />
          <RouteCard route="19" times="6:03 | 19:41" />
        </div>
        <Heading>Searched list</Heading>
        <RouteCard route="55" times="5:12 | 18:30" />
      </div>
      <Measurements />
    </div>
  );
}

/* ---------- Canvas ---------- */

function Canvas() {
  return (
    <main className="flex w-[1912px] flex-col">
      <div className="flex h-[120px] items-center bg-black text-[24px] text-[#8f9091]">
        <span className="ml-10 flex size-10 items-center justify-center rounded-full bg-[#3485f7]"><span className="h-1 w-5 bg-white" /></span>
        <span className="ml-[43px] w-[117px] tracking-[1.9px] [-webkit-text-stroke:0.3px_currentColor]">100%</span>
        <span className="flex size-10 items-center justify-center rounded-full bg-[#3485f7]">
          <svg className="size-5" viewBox="0 0 20 20"><path d="M10 0v20M0 10h20" stroke="#fff" strokeWidth="4" /></svg>
        </span>
        <span className="ml-auto tracking-[1.1px] [-webkit-text-stroke:0.3px_currentColor]">NOTES</span>
        <span className="ml-[21px] mr-10 flex h-10 w-20 items-center justify-end rounded-full bg-[#3485f7] pr-1 shadow-[inset_0_2px_4px_rgba(0,0,0,0.3)]">
          <span className="size-8 rounded-full bg-[#f7f7f6]" />
        </span>
      </div>
      <div className="h-[1472px] bg-[#191919] bg-[radial-gradient(#111_0,#111_2px,transparent_2.500px)] bg-[length:32px_32px]">
        <Phone />
      </div>
      <div className="flex h-4 bg-[#212224] pl-[662px]">
        <div className="h-[15px] w-[568px] rounded-full border-2 border-[#343536] bg-[#0c0c0c]" />
      </div>
    </main>
  );
}

/* ---------- Inspector ---------- */

function Section({ children }: { children: ReactNode }) {
  return (
    <h3 className="flex h-16 items-center bg-gradient-to-r from-[#191c1f] to-[#242527] pl-[31px] tracking-[1.3px] text-[#97989a] [-webkit-text-stroke:0.3px_currentColor]">
      {children}
    </h3>
  );
}

function PropRow({ label, values, hints }: { label: string; values: string[]; hints?: string[] }) {
  return (
    <div className={`flex ${hints ? 'h-[92px]' : 'h-16'}`}>
      <span className="w-[141px] pt-[10px] leading-7 tracking-[2px] text-[#97989a] [-webkit-text-stroke:0.3px_currentColor]">{label}</span>
      <div className="flex gap-4">
        {values.map((v, i) => (
          <div key={i} className="w-[130px]">
            <div className="flex h-12 items-center justify-center rounded-[4px] bg-[#2d2e31] text-white [-webkit-text-stroke:0.8px_white]">{v}</div>
            {hints && <div className="mt-[5px] text-center text-[20px] leading-6 tracking-[2px] text-[#97989a] [-webkit-text-stroke:0.3px_currentColor]">{hints[i]}</div>}
          </div>
        ))}
      </div>
    </div>
  );
}

function Inspector() {
  return (
    <aside className="flex w-[480px] flex-col bg-[#242527] text-[24px]">
      <div className="flex h-[120px] items-center bg-[#0e0e0e] pl-[50px]">
        <svg className="h-9 w-[22px]" viewBox="0 0 22 36"><path d="M2 0h18q2 0 2 2v32q0 2-2 2H2q-2 0-2-2V2q0-2 2-2zM2 4v26h18V4z" fill="#6a6b6d" fillRule="evenodd" /></svg>
        <span className="ml-9 tracking-[1.4px] text-[#8f9091] [-webkit-text-stroke:0.3px_currentColor]">Retina @2x</span>
      </div>
      <div className="flex h-24 items-center justify-center tracking-[1.9px] text-[#97989a] [-webkit-text-stroke:0.3px_currentColor]">search 2</div>
      <Section>PROPERTIES</Section>
      <div className="h-[360px] pl-[31px] pt-8">
        <PropRow label="Position:" values={['12pt', '115pt']} hints={['X', 'Y']} />
        <PropRow label="Size:" values={['10pt', '10pt']} hints={['Width', 'Height']} />
        <PropRow label="Opacity:" values={['100%']} />
        <PropRow label="Radius:" values={['3pt']} />
      </div>
      <Section>FILLS</Section>
      <div className="flex h-28 items-center pl-[31px]">
        <span className="w-[141px] tracking-[2px] text-[#97989a] [-webkit-text-stroke:0.3px_currentColor]">Color:</span>
        <div className="flex h-12 w-[276px] overflow-hidden rounded-[4px] bg-[#2d2e31]">
          <span className="w-12 bg-[#888888]" />
          <span className="flex flex-1 items-center justify-center pl-[7px] text-white [-webkit-text-stroke:0.8px_white]">#888888 100%</span>
        </div>
      </div>
      <Section>CODE TEMPLATE</Section>
      <div className="flex h-20">
        <div className="flex w-40 items-center justify-center bg-[#2d2e31]">
          <svg className="h-[33px] w-9" viewBox="246 828 108 99"><path d="M262 828H354L338 910L290 927L246 909L251 886H270L268 897L292 907L320 897L324 878H252L256 857H328L330 847H258z" fill="#d8d8d8" /></svg>
        </div>
        <div className="flex w-40 items-center justify-center">
          <svg className="h-[38px] w-[30px]" viewBox="735 820 90 113" fill="#5f6062">
            <path d="M742 876Q742 838 780 837Q818 838 818 876zM735 881H825V888Q825 894 819 894V924Q819 933 810 933H750Q741 933 741 924V894Q735 894 735 888z" />
            <path d="M763 823V842M814 831L800 845" stroke="#5f6062" strokeWidth="8" strokeLinecap="round" />
            <circle cx="766" cy="859" r="5" fill="#242527" /><circle cx="794" cy="859" r="5" fill="#242527" />
          </svg>
        </div>
        <div className="flex w-40 items-center justify-center"><FaApple className="size-[43px] text-[#5f6062]" /></div>
      </div>
      <div className="h-[172px] rounded-[4px] bg-[#2d2e31] px-[31px] pt-8 leading-9 tracking-[0.1px] text-white [-webkit-text-stroke:0.8px_white]">
        <p>background: #888888;</p>
        <p>border-radius: 6px;</p>
      </div>
    </aside>
  );
}

export default function App() {
  return (
    <div className="flex h-[1800px] w-[2880px] flex-col overflow-hidden bg-[#0d2f4a] font-['Liberation_Sans',sans-serif]">
      <MenuBar />
      <div className="flex flex-1 bg-gradient-to-b from-[#2b6a87] via-[#123a55] to-[#05204a]">
        <div className="ml-2 flex w-[2872px] flex-col overflow-hidden rounded-bl-[10px] rounded-t-[10px] shadow-[0_0_0_1px_#0b1418]">
          <TabStrip />
          <AddressBar />
          <div className="flex flex-1">
            <Sidebar />
            <Canvas />
            <Inspector />
          </div>
        </div>
      </div>
    </div>
  );
}
